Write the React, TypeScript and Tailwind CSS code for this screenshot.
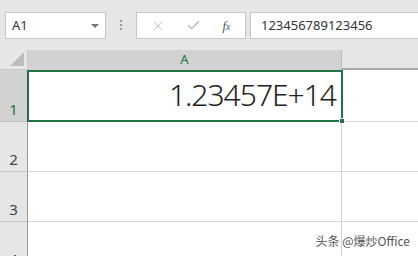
import { X, Check } from 'lucide-react';

const font = { fontFamily: '"Segoe UI", "Noto Sans", "Liberation Sans", sans-serif' };

function RowHeader({ n, active, h }: { n: number; active?: boolean; h: string }) {
  return (
    <div
      className={`flex w-[28px] shrink-0 items-end justify-center border-r border-b border-[#9b9b9b] pb-[4px] text-[15px] leading-none ${
        active ? 'bg-[#d2d2d2] text-[#217346] border-b-[#c0c0c0]' : 'bg-[#e6e6e6] text-[#444] border-b-[#c8c8c8]'
      } ${h}`}
    >
      {n}
    </div>
  );
}

export default function App() {
  return (
    <div className="relative h-[256px] w-[418px] overflow-hidden bg-white" style={font}>
      {/* formula bar */}
      <div className="flex h-[50px] items-start bg-[#e6e6e6] pt-[12px]">
        <div className="ml-[5px] flex h-[27px] w-[101px] items-center justify-between border border-[#c6c6c6] bg-white pl-[6px] pr-[6px]">
          <span className="text-[13px] text-[#333]">A1</span>
          <span className="h-0 w-0 border-x-[4px] border-t-[4px] border-x-transparent border-t-[#777]" />
        </div>
        <div className="ml-[14px] mt-[8px] flex flex-col gap-[2px]">
          <span className="h-[2px] w-[2px] bg-[#999]" />
          <span className="h-[2px] w-[2px] bg-[#999]" />
          <span className="h-[2px] w-[2px] bg-[#999]" />
        </div>
        <div className="ml-[14px] flex h-[27px] w-[110px] items-center justify-around border border-[#c6c6c6] bg-white px-[4px]">
          <X size={14} strokeWidth={1.5} color="#b4b4b4" />
          <Check size={15} strokeWidth={2} color="#b4b4b4" />
          <span className="text-[13px] italic text-[#555]" style={{ fontFamily: '"Liberation Serif", serif' }}>
            f<span className="text-[10px]">x</span>
          </span>
        </div>
        <div className="ml-[4px] flex h-[27px] flex-1 items-center border-y border-l border-[#c6c6c6] bg-white pl-[10px]">
          <span className="text-[13px] text-[#333]">123456789123456</span>
        </div>
      </div>

      {/* column header */}
      <div className="flex h-[20px]">
        <div className="flex w-[28px] shrink-0 items-end justify-end border-r border-b border-[#c6c6c6] bg-[#e6e6e6] pb-[3px] pr-[3px]">
          <svg width="14" height="14" viewBox="0 0 14 14">
            <polygon points="14,0 14,14 0,14" fill="#bdbdbd" />
          </svg>
        </div>
        <div className="flex w-[314px] items-center justify-center border-r border-[#bcbcbc] bg-[#d2d2d2] text-[13px] text-[#217346]">A</div>
        <div className="flex-1 border-b-2 border-[#a9a9a9] bg-[#e6e6e6]" />
      </div>

      {/* row 1 */}
      <div className="flex h-[52px]">
        <RowHeader n={1} active h="h-[52px]" />
        <div className="relative flex w-[316px] -ml-[1px] items-end justify-end border-2 border-[#217346] pr-[5px] pb-[10px]">
          <span className="text-[30px] font-light leading-none tracking-[-1px] text-[#222]">1.23457E+14</span>
          <span className="absolute -bottom-[4px] -right-[4px] h-[6px] w-[6px] border border-white bg-[#217346]" />
        </div>
        <div className="flex-1 border-b border-[#d4d4d4]" />
      </div>

      {/* rows 2-4 */}
      {[2, 3, 4].map((n) => (
        <div key={n} className="flex h-[50px]">
          <RowHeader n={n} h="h-[50px]" />
          <div className="w-[314px] border-r border-b border-[#d4d4d4]" />
          <div className="flex-1 border-b border-[#d4d4d4]" />
        </div>
      ))}

      <span
        className="absolute bottom-[6px] right-[8px] text-[12px] text-[#555]"
        style={{ fontFamily: '"Noto Sans CJK SC", "Noto Sans", sans-serif' }}
      >
        头条 @爆炒Office
      </span>
    </div>
  );
}
